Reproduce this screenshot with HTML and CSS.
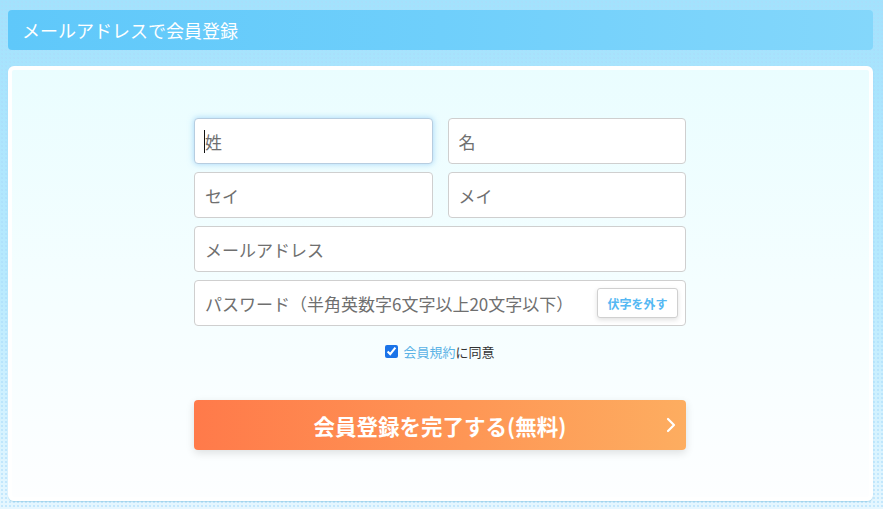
FILE: index.html
```html
<!DOCTYPE html>
<html lang="ja">
<head>
<meta charset="utf-8">
<title>メールアドレスで会員登録</title>
<link rel="stylesheet" href="styles.css">
</head>
<body>
<div class="page">
  <h1 class="title">メールアドレスで会員登録</h1>
  <div class="card">
    <form class="form">
      <div class="row two">
        <div class="field focus">
          <input class="input" type="text" placeholder="姓">
          <span class="caret"></span>
        </div>
        <div class="field"><input class="input" type="text" placeholder="名"></div>
      </div>
      <div class="row two">
        <div class="field"><input class="input" type="text" placeholder="セイ"></div>
        <div class="field"><input class="input" type="text" placeholder="メイ"></div>
      </div>
      <div class="row">
        <div class="field"><input class="input" type="email" placeholder="メールアドレス"></div>
      </div>
      <div class="row">
        <div class="field pw">
          <input class="input" type="password" placeholder="パスワード（半角英数字6文字以上20文字以下）">
          <button type="button" class="reveal">伏字を外す</button>
        </div>
      </div>
      <label class="agree">
        <input class="check" type="checkbox" checked>
        <span><a class="link" href="#">会員規約</a>に同意</span>
      </label>
      <button type="button" class="submit">
        <span class="submit-text">会員登録を完了する(無料)</span>
        <svg class="chev" width="10" height="16" viewBox="0 0 10 16"><polyline points="2,2 8,8 2,14" fill="none" stroke="#fff" stroke-width="2.2" stroke-linecap="round" stroke-linejoin="round"/></svg>
      </button>
    </form>
  </div>
</div>
</body>
</html>
```

FILE: styles.css
```css
html, body {
  margin: 0;
  padding: 0;
  height: 100%;
}
body {
  font-family: "Noto Sans CJK JP", "Noto Sans", sans-serif;
  background-color: #b6e8fd;
  background-image:
    radial-gradient(circle, rgba(170, 220, 250, 0.55) 0.8px, transparent 1.2px),
    linear-gradient(180deg, #a3e2fd 0%, #b8eafe 55%, #e6f7ff 100%);
  background-size: 4px 4px, 100% 100%;
  overflow: hidden;
}
.page {
  padding: 10px 10px 0 8px;
}
.title {
  margin: 0;
  height: 40px;
  box-sizing: border-box;
  padding-left: 14px;
  display: flex;
  align-items: center;
  font-size: 18px;
  font-weight: 400;
  color: #fff;
  border-radius: 4px;
  background: linear-gradient(90deg, #5fc8fa 0%, #6fcffb 50%, #84d7fb 100%);
}
.card {
  margin-top: 16px;
  height: 435px;
  box-sizing: border-box;
  border: 4px solid #fff;
  border-radius: 6px;
  background: linear-gradient(180deg, #eafdff 0%, #f4feff 50%, #fdfeff 100%);
  box-shadow: 0 1px 1px rgba(120, 190, 220, 0.5);
  padding-top: 48px;
  padding-right: 1px;
}
.form {
  width: 492px;
  margin: 0 auto;
  display: flex;
  flex-direction: column;
}
.row {
  display: flex;
  gap: 15px;
  margin-bottom: 8px;
}
.field {
  position: relative;
  flex: 1;
}
.input {
  display: block;
  width: 100%;
  height: 46px;
  box-sizing: border-box;
  border: 1px solid #cfcfcf;
  border-radius: 4px;
  background: #fff;
  padding: 0 10px;
  font-family: inherit;
  font-size: 17px;
  color: #333;
  outline: none;
}
.input::placeholder {
  color: #6f6f6f;
}
.focus .input {
  border-color: #b7cde0;
  box-shadow: 0 0 6px rgba(100, 180, 240, 0.55);
}
.caret {
  position: absolute;
  left: 10px;
  top: 12px;
  width: 1px;
  height: 23px;
  background: #111;
}
.reveal {
  position: absolute;
  right: 8px;
  top: 8px;
  width: 81px;
  height: 30px;
  box-sizing: border-box;
  border: 1px solid #d0d0d0;
  border-radius: 3px;
  background: #fff;
  box-shadow: 0 2px 5px rgba(0, 0, 0, 0.12);
  font-family: inherit;
  font-size: 12px;
  font-weight: 700;
  color: #55b8f3;
  padding: 0;
}
.agree {
  display: flex;
  align-items: center;
  justify-content: center;
  gap: 5px;
  margin-top: 2px;
  font-size: 13px;
  color: #333;
  height: 30px;
}
.check {
  margin: 0;
  width: 13px;
  height: 13px;
  accent-color: #1a73e8;
}
.link {
  color: #5bb3e6;
  text-decoration: none;
}
.submit {
  margin-top: 34px;
  position: relative;
  height: 50px;
  border: none;
  border-radius: 4px;
  background: linear-gradient(90deg, #ff7a4a 0%, #fe9655 55%, #fdad60 100%);
  box-shadow: 0 3px 8px rgba(0, 0, 0, 0.12);
  color: #fff;
  font-family: inherit;
  font-size: 21.5px;
  font-weight: 700;
  display: flex;
  align-items: center;
  justify-content: center;
  padding: 0;
}
.chev {
  position: absolute;
  right: 10px;
  top: 17px;
}
```
